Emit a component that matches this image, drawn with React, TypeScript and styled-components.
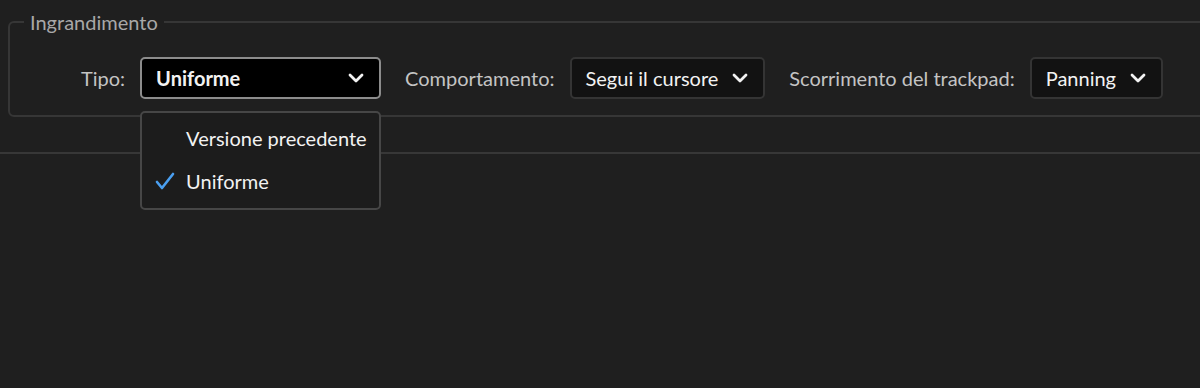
import styled, { createGlobalStyle } from 'styled-components';

const GlobalStyle = createGlobalStyle`
  html, body {
    margin: 0;
    padding: 0;
    background: #1f1f1f;
  }
  body {
    font-family: Lato, "Open Sans", sans-serif;
  }
`;

const Chevron = () => (
  <svg width="16" height="10" viewBox="0 0 16 10">
    <polyline points="2,2 8,8 14,2" fill="none" stroke="#f2f2f2" strokeWidth="2.8" strokeLinecap="round" strokeLinejoin="round" />
  </svg>
);

const Check = () => (
  <svg width="22" height="20" viewBox="0 0 22 20">
    <polyline points="3,11 8,17 19,3" fill="none" stroke="#4a9ff0" strokeWidth="2.6" strokeLinecap="round" strokeLinejoin="round" />
  </svg>
);

export default function App() {
  return (
    <Page>
      <GlobalStyle />
      <Section>
        <Group>
          <Legend>Ingrandimento</Legend>
          <Row>
            <Field>
              <Label>Tipo:</Label>
              <SelectWrap>
                <Select $focused $width={241}>
                  <span>Uniforme</span>
                  <Chevron />
                </Select>
                <Menu>
                  <MenuItem>
                    <CheckSlot />
                    Versione precedente
                  </MenuItem>
                  <MenuItem>
                    <CheckSlot>
                      <Check />
                    </CheckSlot>
                    Uniforme
                  </MenuItem>
                </Menu>
              </SelectWrap>
            </Field>
            <Field>
              <Label>Comportamento:</Label>
              <Select>
                <span>Segui il cursore</span>
                <Chevron />
              </Select>
            </Field>
            <Field>
              <Label>Scorrimento del trackpad:</Label>
              <Select>
                <span>Panning</span>
                <Chevron />
              </Select>
            </Field>
          </Row>
        </Group>
      </Section>
    </Page>
  );
}

const Page = styled.div`
  width: 1200px;
  height: 388px;
  background: #1f1f1f;
  overflow: hidden;
`;

const Section = styled.div`
  padding: 12px 0 35px 8px;
  border-bottom: 2px solid #373737;
`;

const Group = styled.fieldset`
  margin: 0 -20px 0 0;
  padding: 25px 0 16px 0;
  border: 2px solid #363636;
  border-radius: 6px;
`;

const Legend = styled.legend`
  margin-left: 14px;
  padding: 0 6px 0 6px;
  color: #a8a8a8;
  font-size: 20px;
  line-height: 20px;
`;

const Row = styled.div`
  display: flex;
  align-items: center;
  gap: 24px;
  padding-left: 71px;
`;

const Field = styled.div`
  display: flex;
  align-items: center;
  gap: 15px;
`;

const Label = styled.span`
  color: #c4c4c4;
  font-size: 20px;
`;

const SelectWrap = styled.div`
  position: relative;
`;

const Select = styled.div<{ $focused?: boolean; $width?: number }>`
  display: flex;
  align-items: center;
  justify-content: space-between;
  gap: 14px;
  box-sizing: border-box;
  height: 42px;
  width: ${(p) => (p.$width ? `${p.$width}px` : 'auto')};
  padding: 0 15px 0 14px;
  background: ${(p) => (p.$focused ? '#000000' : '#121212')};
  border: 2px solid ${(p) => (p.$focused ? '#8c8c8c' : '#343434')};
  border-radius: 5px;
  color: #f2f2f2;
  font-size: 20px;
  font-weight: ${(p) => (p.$focused ? 700 : 400)};
`;

const Menu = styled.div`
  position: absolute;
  top: 54px;
  left: 0;
  box-sizing: border-box;
  width: 241px;
  height: 99px;
  padding: 3px 0;
  background: #1c1c1c;
  border: 2px solid #464646;
  border-radius: 5px;
  z-index: 1;
`;

const MenuItem = styled.div`
  display: flex;
  align-items: center;
  height: 43px;
  padding-left: 12px;
  color: #f2f2f2;
  font-size: 20px;
`;

const CheckSlot = styled.span`
  display: flex;
  align-items: center;
  width: 32px;
`;
